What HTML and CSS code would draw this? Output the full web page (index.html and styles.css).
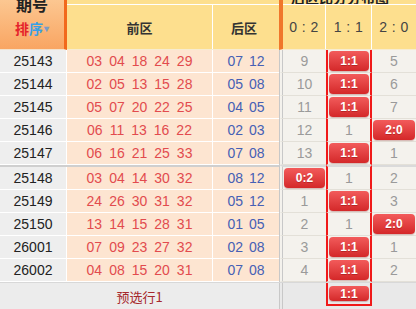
FILE: index.html
```html
<!DOCTYPE html>
<html lang="zh">
<head>
<meta charset="utf-8">
<title>比分走势</title>
<link rel="stylesheet" href="styles.css">
</head>
<body>
<div class="wrap">
  <div class="left">
    <div class="lhead">
      <div class="qh">
        <div class="qh-t">期号</div>
        <div class="sort"><span class="pai">排</span><span class="xu">序</span><span class="caret">▾</span></div>
      </div>
      <div class="zones">
        <div class="strip"></div>
        <div class="zrow"><div class="zc front">前区</div><div class="zc back">后区</div></div>
      </div>
    </div>
    <div class="row"><div class="c qi">25143</div><div class="c fr"><span>03</span><span>04</span><span>18</span><span>24</span><span>29</span></div><div class="c bk"><span>07</span><span>12</span></div></div>
    <div class="row"><div class="c qi">25144</div><div class="c fr"><span>02</span><span>05</span><span>13</span><span>15</span><span>28</span></div><div class="c bk"><span>05</span><span>08</span></div></div>
    <div class="row"><div class="c qi">25145</div><div class="c fr"><span>05</span><span>07</span><span>20</span><span>22</span><span>25</span></div><div class="c bk"><span>04</span><span>05</span></div></div>
    <div class="row"><div class="c qi">25146</div><div class="c fr"><span>06</span><span>11</span><span>13</span><span>16</span><span>22</span></div><div class="c bk"><span>02</span><span>03</span></div></div>
    <div class="row"><div class="c qi">25147</div><div class="c fr"><span>06</span><span>16</span><span>21</span><span>25</span><span>33</span></div><div class="c bk"><span>07</span><span>08</span></div></div>
    <div class="row sep"><div class="c qi">25148</div><div class="c fr"><span>03</span><span>04</span><span>14</span><span>30</span><span>32</span></div><div class="c bk"><span>08</span><span>12</span></div></div>
    <div class="row"><div class="c qi">25149</div><div class="c fr"><span>24</span><span>26</span><span>30</span><span>31</span><span>32</span></div><div class="c bk"><span>05</span><span>12</span></div></div>
    <div class="row"><div class="c qi">25150</div><div class="c fr"><span>13</span><span>14</span><span>15</span><span>28</span><span>31</span></div><div class="c bk"><span>01</span><span>05</span></div></div>
    <div class="row"><div class="c qi">26001</div><div class="c fr"><span>07</span><span>09</span><span>23</span><span>27</span><span>32</span></div><div class="c bk"><span>02</span><span>08</span></div></div>
    <div class="row"><div class="c qi">26002</div><div class="c fr"><span>04</span><span>08</span><span>15</span><span>20</span><span>31</span></div><div class="c bk"><span>07</span><span>08</span></div></div>
    <div class="pre">预选行1</div>
  </div>
  <div class="right">
    <div class="rhead">
      <div class="rstrip"><span>后区比分分布图</span></div>
      <div class="rrow"><div class="h h1">0 : 2</div><div class="h h2">1 : 1</div><div class="h h3">2 : 0</div></div>
    </div>
    <div class="rr"><div class="d c1">9</div><div class="d c2"><span class="b">1:1</span></div><div class="d c3">5</div></div>
    <div class="rr"><div class="d c1">10</div><div class="d c2"><span class="b">1:1</span></div><div class="d c3">6</div></div>
    <div class="rr"><div class="d c1">11</div><div class="d c2"><span class="b">1:1</span></div><div class="d c3">7</div></div>
    <div class="rr"><div class="d c1">12</div><div class="d c2">1</div><div class="d c3"><span class="b">2:0</span></div></div>
    <div class="rr"><div class="d c1">13</div><div class="d c2"><span class="b">1:1</span></div><div class="d c3">1</div></div>
    <div class="rr sep"><div class="d c1"><span class="b">0:2</span></div><div class="d c2">1</div><div class="d c3">2</div></div>
    <div class="rr"><div class="d c1">1</div><div class="d c2"><span class="b">1:1</span></div><div class="d c3">3</div></div>
    <div class="rr"><div class="d c1">2</div><div class="d c2">1</div><div class="d c3"><span class="b">2:0</span></div></div>
    <div class="rr"><div class="d c1">3</div><div class="d c2"><span class="b">1:1</span></div><div class="d c3">1</div></div>
    <div class="rr"><div class="d c1">4</div><div class="d c2"><span class="b">1:1</span></div><div class="d c3">2</div></div>
    <div class="rlast"><div class="e c1"></div><div class="e c2"><span class="b">1:1</span></div><div class="e c3"></div></div>
  </div>
</div>
</body>
</html>
```
FILE: styles.css
```css
* { box-sizing: border-box; margin: 0; padding: 0; }
body {
  margin: 0;
  width: 416px;
  height: 309px;
  overflow: hidden;
  background: #fff;
  font-family: "Liberation Sans", Arial, "Noto Sans CJK SC", sans-serif;
  font-size: 14px;
}
.wrap { display: flex; align-items: flex-start; }
.left { width: 279px; }
.right { width: 137px; }

/* left header */
.lhead { display: flex; height: 50px; }
.qh {
  width: 67px;
  background: linear-gradient(#fcc791, #f9a562);
  border-right: 3px solid #f2691c;
  border-bottom: 1px solid #f4e2cc;
  display: flex;
  flex-direction: column;
  align-items: center;
  overflow: hidden;
}
.qh-t {
  font-family: "Noto Sans CJK SC", sans-serif;
  font-weight: bold;
  font-size: 16px;
  line-height: 16px;
  margin-top: -4px;
  color: #222;
}
.sort {
  margin-top: 8px;
  font-family: "Noto Sans CJK SC", sans-serif;
  font-weight: bold;
  font-size: 14px;
  line-height: 16px;
  display: flex;
  align-items: center;
}
.pai { color: #e5232b; }
.xu { color: #39a0e6; }
.caret { color: #7a9cc8; font-size: 10px; margin-left: 1px; }

.zones { flex: 1; display: flex; flex-direction: column; background: #fddf8e; border-bottom: 1px solid #f7ecd0; }
.strip { height: 5px; border-bottom: 1px solid #fff; }
.zrow { flex: 1; display: flex; }
.zc {
  display: flex;
  align-items: center;
  justify-content: center;
  font-family: "Noto Sans CJK SC", sans-serif;
  font-weight: bold;
  font-size: 13px;
  color: #333;
}
.zc.front { width: 146px; border-right: 1px solid #fff; }
.zc.back { flex: 1; padding-right: 4px; }

/* left body */
.row {
  display: grid;
  grid-template-columns: 67px 146px 66px;
  height: 23px;
  border-bottom: 1px solid #fff;
}
.row.sep { height: 25px; border-top: 2px solid #cfcfcf; }
.c { display: flex; align-items: center; justify-content: center; }
.qi { background: #eeeeee; color: #222; border-right: 1px solid #fff; }
.fr { background: #fde5d1; color: #e24b4e; gap: 7px; border-right: 1px solid #fff; }
.bk { background: #fde5d1; color: #4660b5; gap: 6px; }
.pre {
  height: 27px;
  background: #ececec;
  border-top: 1px solid #d8d8d8;
  color: #a6282c;
  font-family: "Noto Sans CJK SC", sans-serif;
  font-size: 13px;
  display: flex;
  align-items: center;
  justify-content: center;
}

/* right header */
.rhead { height: 50px; background: #fddf8e; border-left: 4px solid #f0772b; border-bottom: 1px solid #f7ecd0; display: flex; flex-direction: column; }
.rstrip { height: 5px; border-bottom: 1px solid #fff; overflow: hidden; padding-left: 8px; }
.rstrip span {
  display: block;
  font-family: "Noto Sans CJK SC", sans-serif;
  font-weight: bold;
  font-size: 14px;
  line-height: 14px;
  margin-top: -10px;
  color: #222;
}
.rrow { flex: 1; display: flex; }
.h { display: flex; align-items: center; justify-content: center; color: #444; font-size: 14px; letter-spacing: 0.5px; }
.h1 { width: 43px; border-right: 1px solid #fff; }
.h2 { width: 46px; border-right: 1px solid #fff; }
.h3 { width: 44px; }

/* right body */
.rr {
  display: grid;
  grid-template-columns: 47px 46px 44px;
  height: 23px;
}
.rr.sep { height: 25px; }
.d {
  display: flex;
  align-items: center;
  justify-content: center;
  color: #9a9a9a;
  background: #f4f2ed;
  border-bottom: 1px solid #e3e0d8;
}
.rr.sep .d { border-top: 2px solid #dadada; }
.c1 { border-left: 4px double #c8c8c8; }
.c2 { border-left: 2px solid #f01a1a; border-right: 2px solid #f01a1a; }
.b {
  flex: 1;
  margin: 0 1px;
  height: 20px;
  border-radius: 4px;
  background: linear-gradient(#f25b5b, #d42829);
  color: #fff;
  font-weight: bold;
  font-size: 12px;
  display: flex;
  align-items: center;
  justify-content: center;
  text-shadow: 0 1px 0 rgba(120, 0, 0, 0.35);
  box-shadow: 0 1px 1px rgba(120, 0, 0, 0.25);
}
.rlast {
  display: grid;
  grid-template-columns: 47px 46px 44px;
  height: 27px;
  background: #e9e9e9;
  border-top: 1px solid #d8d8d8;
  align-items: start;
}
.e { height: 26px; display: flex; align-items: center; }
.rlast .c2 { height: 23px; border-bottom: 2px solid #f01a1a; }
.rlast .b { height: 15px; }
```
